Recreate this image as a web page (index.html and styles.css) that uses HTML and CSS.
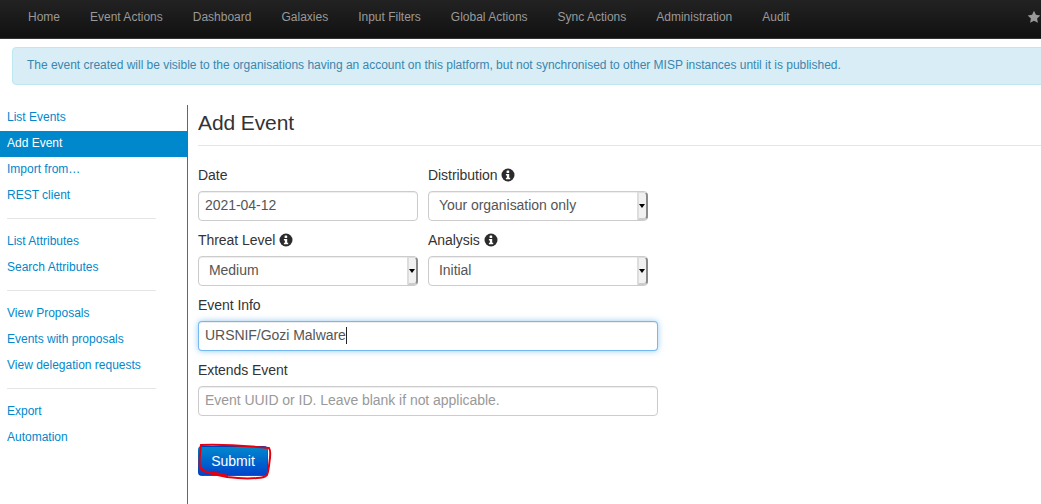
FILE: index.html
```html
<!DOCTYPE html>
<html lang="en">
<head>
  <meta charset="UTF-8" />
  <title>Add Event</title>
  <link rel="stylesheet" href="styles.css">
</head>
<body>
  <div class="page">
    <div class="navbar">
      <a href="#">Home</a>
      <a href="#">Event Actions</a>
      <a href="#">Dashboard</a>
      <a href="#">Galaxies</a>
      <a href="#">Input Filters</a>
      <a href="#">Global Actions</a>
      <a href="#">Sync Actions</a>
      <a href="#">Administration</a>
      <a href="#">Audit</a>
      <svg class="star" width="14" height="14" viewBox="0 0 14 14"><path d="M7 .8l1.900 4 4.400.6-3.200 3 .8 4.400L7 10.700l-3.900 2.100.8-4.400-3.200-3 4.400-.6z" fill="#999"/></svg>
    </div>

    <div class="alert">The event created will be visible to the organisations having an account on this platform, but not synchronised to other MISP instances until it is published.</div>

    <div class="main">
      <ul class="sidebar">
        <li><a href="#">List Events</a></li>
        <li><a href="#" class="active">Add Event</a></li>
        <li><a href="#">Import from…</a></li>
        <li><a href="#">REST client</a></li>
        <li class="divider"></li>
        <li><a href="#">List Attributes</a></li>
        <li><a href="#">Search Attributes</a></li>
        <li class="divider"></li>
        <li><a href="#">View Proposals</a></li>
        <li><a href="#">Events with proposals</a></li>
        <li><a href="#">View delegation requests</a></li>
        <li class="divider"></li>
        <li><a href="#">Export</a></li>
        <li><a href="#">Automation</a></li>
      </ul>

      <form class="content">
        <h2>Add Event</h2>
        <div class="row">
          <div class="field">
            <label>Date</label>
            <input type="text" class="input" value="2021-04-12">
          </div>
          <div class="field">
            <label>Distribution <svg class="info" viewBox="0 0 14 14"><circle cx="7" cy="7" r="6.500" fill="#2b2b2b"/><rect x="5.600" y="2.600" width="2.600" height="2.300" rx=".5" fill="#fff"/><path d="M4.900 6h3.300v3.700h1v1.500H4.900V9.700h1V7.500h-1z" fill="#fff"/></svg></label>
            <div class="select-wrap">
              <select class="input select"><option>Your organisation only</option></select>
              <span class="spin"></span>
            </div>
          </div>
        </div>
        <div class="row">
          <div class="field">
            <label>Threat Level <svg class="info" viewBox="0 0 14 14"><circle cx="7" cy="7" r="6.500" fill="#2b2b2b"/><rect x="5.600" y="2.600" width="2.600" height="2.300" rx=".5" fill="#fff"/><path d="M4.900 6h3.300v3.700h1v1.500H4.900V9.700h1V7.500h-1z" fill="#fff"/></svg></label>
            <div class="select-wrap">
              <select class="input select"><option>Medium</option></select>
              <span class="spin"></span>
            </div>
          </div>
          <div class="field">
            <label>Analysis <svg class="info" viewBox="0 0 14 14"><circle cx="7" cy="7" r="6.500" fill="#2b2b2b"/><rect x="5.600" y="2.600" width="2.600" height="2.300" rx=".5" fill="#fff"/><path d="M4.900 6h3.300v3.700h1v1.500H4.900V9.700h1V7.500h-1z" fill="#fff"/></svg></label>
            <div class="select-wrap">
              <select class="input select"><option>Initial</option></select>
              <span class="spin"></span>
            </div>
          </div>
        </div>
        <div class="field wide">
          <label>Event Info</label>
          <div class="input focused">URSNIF/Gozi Malware<span class="caret"></span></div>
        </div>
        <div class="field wide">
          <label>Extends Event</label>
          <input type="text" class="input" placeholder="Event UUID or ID. Leave blank if not applicable.">
        </div>
        <div class="submit-wrap">
          <button type="button" class="btn">Submit</button>
          <svg class="scribble" width="78" height="42" viewBox="0 0 78 42"><path d="M3 3C20 2 50 4 71 6c2 3 1 7 1 10-1 6-1 12-3 17-3 3-6 3-10 3-10 1-22 0-30-1-8-2-16-3-20-5-4-1-6-2-7-4C1 20 2 11 3 3zM3 26c3 4 8 5 14 5 5 0 8 2 13 3" fill="none" stroke="#e6000f" stroke-width="2"/></svg>
        </div>
      </form>
    </div>
  </div>
</body>
</html>
```

FILE: styles.css
```css
html, body {
  margin: 0;
  height: 100%;
  overflow: hidden;
}
body {
  background: #fff;
  color: #333;
  font-family: "Liberation Sans", Arial, sans-serif;
  font-size: 14px;
}
.page {
  width: 1060px;
}
.navbar {
  height: 38px;
  background: linear-gradient(#222, #111);
  border-bottom: 1px solid #333;
  display: flex;
  align-items: center;
  padding-left: 13px;
  position: relative;
}
.navbar a {
  color: #999;
  font-size: 12px;
  text-decoration: none;
  padding: 0 15px 5px;
}
.star {
  position: absolute;
  left: 1027px;
  top: 10px;
}
.alert {
  margin: 8px 0 0 12px;
  height: 36px;
  line-height: 34px;
  padding-left: 14px;
  background: #d9edf7;
  border: 1px solid #bce8f1;
  border-radius: 4px 0 0 4px;
  color: #3a87ad;
  font-size: 12px;
  letter-spacing: -0.02px;
}
.main {
  display: flex;
  margin-top: 20px;
}
.sidebar {
  list-style: none;
  margin: 0;
  padding: 0;
  width: 187px;
  height: 399px;
  border-right: 1px solid #666;
  font-size: 12px;
}
.sidebar a {
  display: block;
  height: 26px;
  line-height: 25px;
  padding-left: 7px;
  color: #0088cc;
  text-decoration: none;
}
.sidebar a.active {
  background: #0088cc;
  color: #fff;
}
.divider {
  height: 1px;
  width: 149px;
  margin: 9px 0 10px 7px;
  background: #e5e5e5;
}
.content {
  flex: 1;
  padding-left: 10px;
}
h2 {
  margin: 0 0 19px;
  height: 40px;
  line-height: 35px;
  font-size: 21px;
  font-weight: normal;
  letter-spacing: -0.1px;
  color: #333;
  border-bottom: 1px solid #e5e5e5;
}
.row {
  display: flex;
  gap: 10px;
}
.field {
  width: 220px;
  margin-bottom: 9px;
}
.field.wide {
  width: 460px;
}
label {
  display: flex;
  align-items: center;
  gap: 4px;
  height: 20px;
  margin-bottom: 6px;
  font-size: 14px;
  line-height: 20px;
  letter-spacing: -0.05px;
}
.info {
  width: 14px;
  height: 14px;
}
.input {
  display: block;
  box-sizing: border-box;
  width: 100%;
  height: 30px;
  margin: 0;
  padding: 3px 6px 5px;
  font-family: inherit;
  font-size: 14px;
  line-height: 20px;
  letter-spacing: -0.04px;
  color: #555;
  background: #fff;
  border: 1px solid #ccc;
  border-radius: 4px;
  box-shadow: inset 0 1px 1px rgba(0, 0, 0, 0.075);
}
.input::placeholder {
  color: #999;
}
.focused {
  border-color: rgba(82, 168, 236, 0.8);
  box-shadow: inset 0 1px 1px rgba(0, 0, 0, 0.075), 0 0 6px rgba(82, 168, 236, 0.6);
}
.caret {
  display: inline-block;
  width: 1px;
  height: 17px;
  background: #222;
  vertical-align: -4px;
}
.select-wrap {
  position: relative;
}
.select {
  appearance: none;
  padding-left: 10px;
}
.spin {
  position: absolute;
  right: 0;
  top: 1px;
  width: 11px;
  height: 28px;
  box-sizing: border-box;
  background: #f1f1f1;
  border-right: 2px solid #8a8a8a;
  border-left: 2px solid #ddd;
  border-top: 1px solid #ddd;
  border-bottom: 2px solid #ccc;
  border-radius: 0 4px 4px 0;
}
.spin::after {
  content: "";
  position: absolute;
  left: 0;
  top: 11px;
  border: 3.500px solid transparent;
  border-top: 4px solid #000;
  border-bottom: 0;
}
.submit-wrap {
  position: relative;
  width: 70px;
  margin-top: 30px;
}
.btn {
  display: block;
  width: 70px;
  height: 30px;
  padding: 0;
  font-family: inherit;
  font-size: 14px;
  color: #fff;
  background: linear-gradient(#0088cc, #0044cc);
  border: 1px solid rgba(0, 0, 0, 0.1);
  border-bottom-color: rgba(0, 0, 0, 0.25);
  border-radius: 4px;
}
.scribble {
  position: absolute;
  left: 0;
  top: -4px;
}
```
